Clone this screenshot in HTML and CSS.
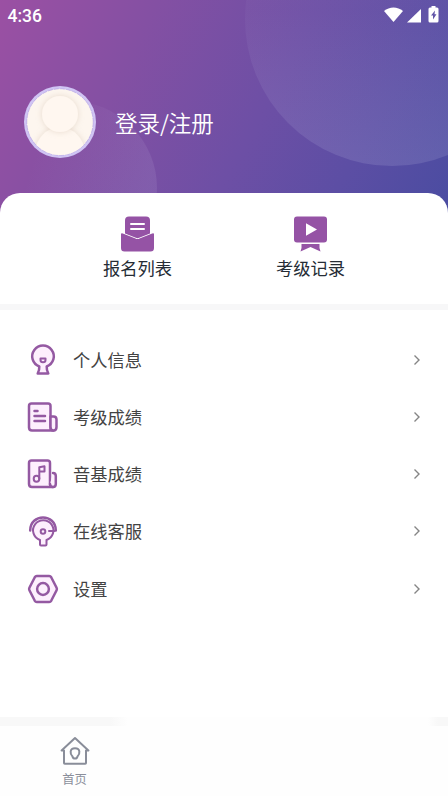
FILE: index.html
```html
<!DOCTYPE html>
<html lang="zh-CN">
<head>
<meta charset="utf-8">
<title>我的</title>
<link rel="stylesheet" href="styles.css">
</head>
<body>
<div class="app">
  <header class="hero">
    <svg class="hero-art" viewBox="0 0 448 216" aria-hidden="true">
      <defs>
        <linearGradient id="big" gradientUnits="userSpaceOnUse" x1="380" y1="10" x2="380" y2="166"><stop offset="0" stop-color="#b8b6de" stop-opacity=".05"/><stop offset="1" stop-color="#b8b6de" stop-opacity=".19"/></linearGradient>
        <linearGradient id="small" x1="0" y1="0" x2="1" y2=".3"><stop offset=".35" stop-color="#c0b0dc" stop-opacity="0"/><stop offset="1" stop-color="#c0b0dc" stop-opacity=".14"/></linearGradient>
      </defs>
      <circle cx="392" cy="19" r="147" fill="url(#big)"/>
      <circle cx="70" cy="188" r="87" fill="url(#small)"/>
    </svg>
    <div class="status">
      <span class="time">4:36</span>
      <svg class="status-icons" width="58" height="20" viewBox="0 0 58 20" fill="#fff">
        <path d="M1 5C6.500 .2 14.500 .2 20 5L10.500 16Z"/>
        <path d="M38 3V16.500H24Z"/>
        <path fill-rule="evenodd" d="M48.500 0h4v1.500h1.500q1.500 0 1.500 1.500v12q0 1.500-1.500 1.500h-7q-1.500 0-1.500-1.500V3q0-1.500 1.500-1.500h1.500ZM52 4.500l-4 5h2v4l3.500-5.300h-2Z"/>
      </svg>
    </div>
    <div class="profile">
      <svg class="avatar" width="72" height="72" viewBox="0 0 72 72">
        <defs>
          <clipPath id="face"><circle cx="36" cy="36" r="33"/></clipPath>
          <filter id="soft" x="-30%" y="-30%" width="160%" height="160%"><feDropShadow dx="0" dy="0" stdDeviation="3" flood-color="#c8b29c" flood-opacity=".42"/></filter>
        </defs>
        <circle cx="36" cy="36" r="36" fill="#d0c4f4"/>
        <circle cx="36" cy="36" r="33.200" fill="#fdf6ef" stroke="#a898dc" stroke-width=".5" stroke-dasharray="5 1"/>
        <g clip-path="url(#face)" fill="#fff7f0">
          <circle cx="36" cy="66" r="24.500" filter="url(#soft)"/>
          <circle cx="36" cy="28" r="18" filter="url(#soft)"/>
        </g>
      </svg>
      <span class="login">登录/注册</span>
    </div>
  </header>
  <main class="panel">
    <nav class="shortcuts">
      <a class="shortcut">
        <svg width="36" height="36" viewBox="0 0 36 36">
          <path d="M5 4.500Q5 .5 9 .5H26Q30 .5 30 4.500V18L18 24 5 18Z" fill="#9553a5"/>
          <path d="M11 8H24M11 13H24" stroke="#fff" stroke-width="2" stroke-linecap="round"/>
          <path d="M1 18.500Q1 16.800 2.800 17.600L15.500 22.500Q17.500 23.500 19.500 22.500L32.200 17.600Q34 16.800 34 18.500V32Q34 35.500 30.500 35.500H4.500Q1 35.500 1 32Z" fill="#9553a5" stroke="#fff" stroke-width="1.600" paint-order="stroke"/>
        </svg>
        <span>报名列表</span>
      </a>
      <a class="shortcut">
        <svg width="36" height="36" viewBox="0 0 36 36" fill="#9553a5">
          <path fill-rule="evenodd" d="M4 .5H31Q34 .5 34 3.500V23.500Q34 26.500 31 26.500H4Q1 26.500 1 23.500V3.500Q1 .5 4 .5ZM13 7.300V19.700L24 13.500Z"/>
          <path d="M8.500 28H26.500Q26 32 27.500 35.500L17.500 31 7.500 35.500Q9 32 8.500 28Z"/>
        </svg>
        <span>考级记录</span>
      </a>
    </nav>
    <div class="divider"></div>
    <ul class="menu">
      <li>
        <svg class="icon" viewBox="0 0 32 32"><path d="M12.300 22.500A10.800 10.800 0 1 1 19.700 22.500Q19.500 26 21.300 29.500H10.700Q12.500 26 12.300 22.500Z"/><path class="thin" d="M13.500 14.500H18.500V16Q18.500 18.300 16 18.300 13.500 18.300 13.500 16Z"/></svg>
        <span class="label">个人信息</span><svg class="arrow" viewBox="0 0 8 12"><path d="M1.500 1.500 6 6 1.500 10.500"/></svg>
      </li>
      <li>
        <svg class="icon" viewBox="0 0 32 32"><path d="M4.500 2.500H21Q23.500 2.500 23.500 5V26Q23.500 29.500 26.500 29.500H5Q2 29.500 2 26.500V5Q2 2.500 4.500 2.500Z"/><path d="M23.500 15.500H26.500Q29.500 15.500 29.500 18.500V26Q29.500 29.500 26.500 29.500 23.500 29.500 23.500 26Z"/><path d="M7.500 10H10.500M7.500 15H18M7.500 20H18"/></svg>
        <span class="label">考级成绩</span><svg class="arrow" viewBox="0 0 8 12"><path d="M1.500 1.500 6 6 1.500 10.500"/></svg>
      </li>
      <li>
        <svg class="icon" viewBox="0 0 32 32"><path d="M4.500 2.500H20.500Q23 2.500 23 5V26Q23 29 26 29H5Q2 29 2 26V5Q2 2.500 4.500 2.500Z"/><path d="M26 15Q28.800 15 28.800 18V26Q28.800 29 26 29 23 29 23 26"/><ellipse class="thin" cx="9.500" cy="20.800" rx="2.800" ry="3"/><path class="note" d="M12.300 20.800V9.200L17.500 8.300V13.500H13"/></svg>
        <span class="label">音基成绩</span><svg class="arrow" viewBox="0 0 8 12"><path d="M1.500 1.500 6 6 1.500 10.500"/></svg>
      </li>
      <li>
        <svg class="icon" viewBox="0 0 32 32"><path class="thin" d="M13 25A10.200 10.200 0 1 1 19.500 25V29.500Q19.500 30.500 18.500 30.500H14Q13 30.500 13 29.500Z"/><path class="arc" d="M3.200 15.500C3.200-1.800 28.800-1.800 28.800 15.500"/><path class="thin" d="M27.500 16H22"/><circle class="thin" cx="16" cy="16.500" r="2.300"/></svg>
        <span class="label">在线客服</span><svg class="arrow" viewBox="0 0 8 12"><path d="M1.500 1.500 6 6 1.500 10.500"/></svg>
      </li>
      <li>
        <svg class="icon" viewBox="0 0 32 32"><path d="M9.800 3H22.200Q23.500 3 24.200 4.200L29.600 14.800Q30.200 16 29.600 17.200L24.200 27.800Q23.500 29 22.200 29H9.800Q8.500 29 7.800 27.800L2.400 17.200Q1.800 16 2.400 14.800L7.800 4.200Q8.500 3 9.800 3Z"/><circle cx="16" cy="16" r="5.900"/></svg>
        <span class="label">设置</span><svg class="arrow" viewBox="0 0 8 12"><path d="M1.500 1.500 6 6 1.500 10.500"/></svg>
      </li>
    </ul>
  </main>
  <footer class="tabbar">
    <div class="tabline"><span></span><span></span></div>
    <a class="tab">
      <svg width="30" height="30" viewBox="0 0 30 30"><path d="M4 14.500H1.600L15 2 28.400 14.500H26V27Q26 27.800 25.200 27.800H4.800Q4 27.800 4 27Z"/><path d="M15 12.300C9.500 12.300 9.800 18 12.500 20.500Q13 22.600 15 22.600T17.500 20.500C20.200 18 20.500 12.300 15 12.300Z"/></svg>
      <span>首页</span>
    </a>
  </footer>
</div>
</body>
</html>
```
FILE: styles.css
```css
* { box-sizing: border-box; }

body {
  margin: 0;
  background: #fff;
  font-family: Roboto, "Noto Sans CJK SC", sans-serif;
}

.app {
  width: 448px;
  height: 796px;
  display: flex;
  flex-direction: column;
  overflow: hidden;
}

.hero {
  position: relative;
  height: 216px;
  flex: none;
  background: linear-gradient(118deg, #9b50a3 0%, #8450a3 28%, #6d4fa5 57%, #5c4ea4 78%, #4a4ca1 100%);
}

.hero-art { position: absolute; inset: 0; width: 448px; height: 216px; }

.status {
  position: relative;
  height: 32px;
  padding: 0 7px 0 7.5px;
  display: flex;
  justify-content: space-between;
  align-items: center;
}

.time { color: #fff; font-size: 17.5px; font-weight: 500; }

.profile {
  position: relative;
  margin: 54px 0 0 24px;
  display: flex;
  align-items: center;
  gap: 19px;
}

.login {
  color: #fff;
  font: 350 22.5px/32px "Noto Sans CJK SC", sans-serif;
  padding-bottom: 1px;
}

.panel {
  position: relative;
  flex: 1;
  margin-top: -23px;
  background: #fff;
  border-radius: 20px 20px 0 0;
}

.shortcuts {
  display: flex;
  height: 111px;
  padding: 23px 51px 0;
}

.shortcut {
  flex: 1;
  display: flex;
  flex-direction: column;
  align-items: center;
  gap: 4px;
  color: #252c35;
  font-size: 17.3px;
  line-height: 26px;
}

.divider { height: 6px; background: #f7f7f8; }

.menu { list-style: none; margin: 0; padding: 21px 27px 0; }

.menu li { display: flex; align-items: center; height: 57.25px; }

.icon {
  width: 32px;
  height: 32px;
  fill: #fdeffd;
  stroke: #9459a2;
  stroke-width: 2.5;
  stroke-linecap: round;
  stroke-linejoin: round;
}

.icon .thin, .icon .note { stroke-width: 2; }
.icon .arc, .icon .note { fill: none; }

.label {
  flex: 1;
  margin-left: 14px;
  padding-top: 2px;
  color: #434343;
  font-size: 17.3px;
  line-height: 26px;
}

.arrow {
  width: 8px;
  height: 12px;
  fill: none;
  stroke: #858585;
  stroke-width: 1.4;
}

.tabbar { height: 79px; flex: none; background: #fefefe; }

.tabline { height: 9px; display: flex; justify-content: space-between; }
.tabline span { width: 128px; background: linear-gradient(90deg, #f8f8f8 86%, #fefefe); }
.tabline span + span { width: 20px; background: linear-gradient(270deg, #f8f8f8 50%, #fefefe); }

.tab {
  width: 149px;
  padding-top: 10px;
  display: flex;
  flex-direction: column;
  align-items: center;
  color: #8b8f9b;
  font-size: 12.3px;
  line-height: 18px;
  gap: 5px;
}

.tab svg { fill: none; stroke: #898d99; stroke-width: 2; stroke-linejoin: round; }
```
